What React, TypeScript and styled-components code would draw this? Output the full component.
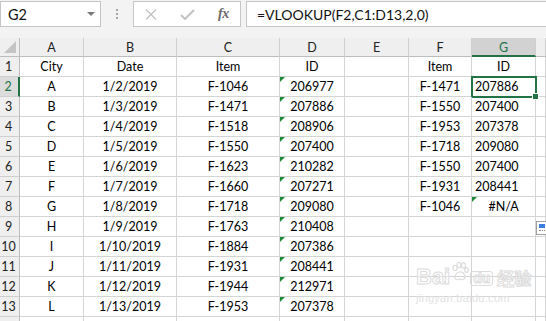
import React from 'react';
import styled, { createGlobalStyle, css } from 'styled-components';

const GlobalStyle = createGlobalStyle`
  html, body { margin: 0; padding: 0; background: #fff; }
  body { font-family: Lato, "Liberation Sans", sans-serif; overflow: hidden; }
`;

const GREEN = '#217346';
const GRID = '#d4d4d4';

const Window = styled.div`
  position: relative;
  width: 546px;
  height: 321px;
  overflow: hidden;
  display: flex;
  flex-direction: column;
  background: #fff;
`;

const FormulaBar = styled.div`
  display: flex;
  align-items: flex-start;
  height: 38px;
  padding-top: 1px;
  box-sizing: border-box;
  background: #f3f3f3;
  flex: none;
`;

const NameBox = styled.div`
  width: 101px;
  height: 26px;
  box-sizing: border-box;
  border: 1px solid #c6c6c6;
  background: #fff;
  display: flex;
  align-items: center;
  padding-left: 7px;
  font-size: 14.5px;
  color: #111;
`;

const DropArrow = styled.span`
  margin-left: auto;
  margin-right: 5px;
  width: 0;
  height: 0;
  border-left: 4px solid transparent;
  border-right: 4px solid transparent;
  border-top: 4px solid #7a7a7a;
`;

const Divider = styled.div`
  width: 32px;
  height: 26px;
  display: flex;
  flex-direction: column;
  align-items: center;
  justify-content: center;
  gap: 2px;
`;

const Dot = styled.span`
  width: 2px;
  height: 2px;
  background: #a6a6a6;
`;

const ButtonBox = styled.div`
  width: 108px;
  height: 26px;
  box-sizing: border-box;
  border: 1px solid #c6c6c6;
  background: #fff;
  display: flex;
  align-items: center;
  padding-left: 11px;
`;

const IconSlot = styled.span<{ $w: number }>`
  width: ${p => p.$w}px;
  display: flex;
  align-items: center;
`;

const Fx = styled.span`
  font-family: "Liberation Serif", serif;
  font-style: italic;
  font-weight: bold;
  font-size: 14px;
  color: #6a6a6a;
  letter-spacing: -0.5px;
`;

const FormulaInput = styled.div`
  margin-left: 5px;
  flex: 1;
  height: 26px;
  box-sizing: border-box;
  border: 1px solid #c6c6c6;
  border-right: none;
  background: #fff;
  display: flex;
  align-items: center;
  padding-left: 10px;
  font-size: 14px;
  color: #111;
  white-space: nowrap;
`;

const Sheet = styled.div`
  display: grid;
  grid-template-columns: 20px 64px 93px 103px 65px 64px 63px 64px 1fr;
  grid-template-rows: 19px;
  grid-auto-rows: 20px;
  font-size: 12.5px;
  color: #000;
`;

type Kind = 'corner' | 'colhead' | 'rowhead' | 'cell';

const Cell = styled.div<{
  $kind: Kind;
  $align?: 'left' | 'center';
  $sel?: boolean;
  $flag?: boolean;
  $active?: boolean;
}>`
  position: relative;
  box-sizing: border-box;
  border-right: 1px solid ${GRID};
  border-bottom: 1px solid ${GRID};
  display: flex;
  align-items: center;
  justify-content: ${p => (p.$align === 'left' ? 'flex-start' : 'center')};
  padding-left: ${p => (p.$align === 'left' ? '3px' : '0')};
  white-space: nowrap;
  ${p =>
    p.$kind === 'colhead' &&
    css`
      background: ${p.$sel ? '#d2d2d2' : '#efefef'};
      border-right-color: #cfcfcf;
      border-bottom: ${p.$sel ? `2px solid ${GREEN}` : '1px solid #bdbdbd'};
      color: ${p.$sel ? GREEN : '#222'};
      padding-top: ${p.$sel ? '1px' : '0'};
    `}
  ${p =>
    p.$kind === 'rowhead' &&
    css`
      background: ${p.$sel ? '#dcdcdc' : '#efefef'};
      border-right: ${p.$sel ? `2px solid ${GREEN}` : '1px solid #bdbdbd'};
      border-bottom-color: #cfcfcf;
      color: ${p.$sel ? GREEN : '#222'};
      justify-content: center;
      padding-right: 2px;
    `}
  ${p =>
    p.$kind === 'corner' &&
    css`
      background: #efefef;
      border-right: 1px solid #bdbdbd;
      border-bottom: 1px solid #bdbdbd;
    `}
  ${p =>
    p.$flag &&
    css`
      &::before {
        content: '';
        position: absolute;
        left: 0;
        top: 0;
        border-top: 5px solid #1e8a3a;
        border-right: 5px solid transparent;
      }
    `}
  ${p =>
    p.$active &&
    css`
      &::after {
        content: '';
        position: absolute;
        left: -1px;
        top: -1px;
        right: -2px;
        bottom: -2px;
        border: 2px solid ${GREEN};
        pointer-events: none;
      }
    `}
`;

const CornerTriangle = styled.span`
  position: absolute;
  right: 3px;
  bottom: 3px;
  width: 0;
  height: 0;
  border-left: 12px solid transparent;
  border-bottom: 12px solid #c4c4c4;
`;

const FillHandle = styled.span`
  position: absolute;
  right: -4px;
  bottom: -4px;
  width: 5px;
  height: 5px;
  background: ${GREEN};
  border: 1px solid #fff;
  z-index: 2;
`;

const PasteIcon = styled.div`
  position: absolute;
  left: 536px;
  top: 221px;
  width: 12px;
  height: 14px;
  box-sizing: border-box;
  border: 1px solid #a0a0a0;
  background: #fff;
  padding: 2px;
  display: flex;
  flex-direction: column;
  gap: 2px;
`;

const PasteBar = styled.span`
  height: 4px;
  background: #3d7fe0;
`;

const PasteDots = styled.span`
  border-top: 1px dotted #888;
`;

const Watermark = styled.div`
  position: absolute;
  left: 416px;
  top: 262px;
  display: flex;
  flex-direction: column;
  pointer-events: none;
  color: rgba(255, 255, 255, 0.4);
  -webkit-text-stroke: 1px #dcdcdc;
`;

const WmTop = styled.div`
  display: flex;
  align-items: flex-end;
  gap: 1px;
  font-family: "Liberation Sans", sans-serif;
  font-weight: bold;
  font-size: 22px;
  line-height: 22px;
`;

const WmDu = styled.span`
  border: 1.5px solid #dcdcdc;
  border-radius: 3px;
  font-size: 14px;
  line-height: 13px;
  padding: 0 2px;
  margin-bottom: 2px;
`;

const WmCjk = styled.span`
  font-family: "Noto Sans CJK SC", sans-serif;
  font-size: 17px;
  line-height: 20px;
  margin-left: 3px;
`;

const WmBottom = styled.div`
  font-family: "Liberation Sans", sans-serif;
  font-size: 11px;
  color: #e2e2e2;
  -webkit-text-stroke: 0;
  margin-top: 4px;
  letter-spacing: 0.3px;
`;

const cols = ['A', 'B', 'C', 'D', 'E', 'F', 'G', ''];

const data: string[][] = [
  ['City', 'Date', 'Item', 'ID', '', 'Item', 'ID'],
  ['A', '1/2/2019', 'F-1046', '206977', '', 'F-1471', '207886'],
  ['B', '1/3/2019', 'F-1471', '207886', '', 'F-1550', '207400'],
  ['C', '1/4/2019', 'F-1518', '208906', '', 'F-1953', '207378'],
  ['D', '1/5/2019', 'F-1550', '207400', '', 'F-1718', '209080'],
  ['E', '1/6/2019', 'F-1623', '210282', '', 'F-1550', '207400'],
  ['F', '1/7/2019', 'F-1660', '207271', '', 'F-1931', '208441'],
  ['G', '1/8/2019', 'F-1718', '209080', '', 'F-1046', '#N/A'],
  ['H', '1/9/2019', 'F-1763', '210408', '', '', ''],
  ['I', '1/10/2019', 'F-1884', '207386', '', '', ''],
  ['J', '1/11/2019', 'F-1931', '208441', '', '', ''],
  ['K', '1/12/2019', 'F-1944', '212971', '', '', ''],
  ['L', '1/13/2019', 'F-1953', '207378', '', '', ''],
  ['', '', '', '', '', '', ''],
];

const Paw = () => (
  <svg width="18" height="20" viewBox="0 0 18 20" style={{ marginBottom: 6 }}>
    <g fill="none" stroke="#dcdcdc" strokeWidth="1.2">
      <ellipse cx="4" cy="6" rx="2" ry="2.6" />
      <ellipse cx="8" cy="3" rx="2" ry="2.6" />
      <ellipse cx="12.5" cy="3.5" rx="2" ry="2.6" />
      <ellipse cx="15.5" cy="8" rx="1.8" ry="2.4" />
      <path d="M4 15 C5 9 12 8 14 14 C15 18 10 18 9 17 C7 18 3 18 4 15 Z" />
    </g>
  </svg>
);

export default function App() {
  return (
    <Window>
      <GlobalStyle />
      <FormulaBar>
        <NameBox>
          G2
          <DropArrow />
        </NameBox>
        <Divider>
          <Dot />
          <Dot />
          <Dot />
        </Divider>
        <ButtonBox>
          <IconSlot $w={35}>
            <svg width="12" height="11" viewBox="0 0 12 11">
              <path d="M1 0.5 L11 10.5 M11 0.5 L1 10.5" stroke="#c3c3c3" strokeWidth="1.4" />
            </svg>
          </IconSlot>
          <IconSlot $w={38}>
            <svg width="15" height="11" viewBox="0 0 15 11">
              <path d="M1 6 L5 10 L14 1" stroke="#c3c3c3" strokeWidth="2" fill="none" />
            </svg>
          </IconSlot>
          <IconSlot $w={16}>
            <Fx>fx</Fx>
          </IconSlot>
        </ButtonBox>
        <FormulaInput>=VLOOKUP(F2,C1:D13,2,0)</FormulaInput>
      </FormulaBar>
      <Sheet>
        <Cell $kind="corner">
          <CornerTriangle />
        </Cell>
        {cols.map((c, i) => (
          <Cell key={i} $kind="colhead" $sel={c === 'G'}>
            {c}
          </Cell>
        ))}
        {data.map((row, r) => (
          <React.Fragment key={r}>
            <Cell $kind="rowhead" $sel={r === 1}>
              {r < 13 ? r + 1 : ''}
            </Cell>
            {row.map((v, c) => {
              const isG = c === 6;
              const leftAligned = isG && r > 0 && v !== '#N/A';
              const flag = (c === 3 && r > 0 && r < 13) || (isG && v === '#N/A');
              const active = isG && r === 1;
              return (
                <Cell
                  key={c}
                  $kind="cell"
                  $align={leftAligned ? 'left' : 'center'}
                  $flag={flag}
                  $active={active}
                >
                  {v}
                  {active && <FillHandle />}
                </Cell>
              );
            })}
            <Cell $kind="cell" />
          </React.Fragment>
        ))}
      </Sheet>
      <PasteIcon>
        <PasteBar />
        <PasteDots />
      </PasteIcon>
      <Watermark>
        <WmTop>
          <span>Bai</span>
          <Paw />
          <WmDu>du</WmDu>
          <WmCjk>经验</WmCjk>
        </WmTop>
        <WmBottom>jingyan.baidu.com</WmBottom>
      </Watermark>
    </Window>
  );
}
